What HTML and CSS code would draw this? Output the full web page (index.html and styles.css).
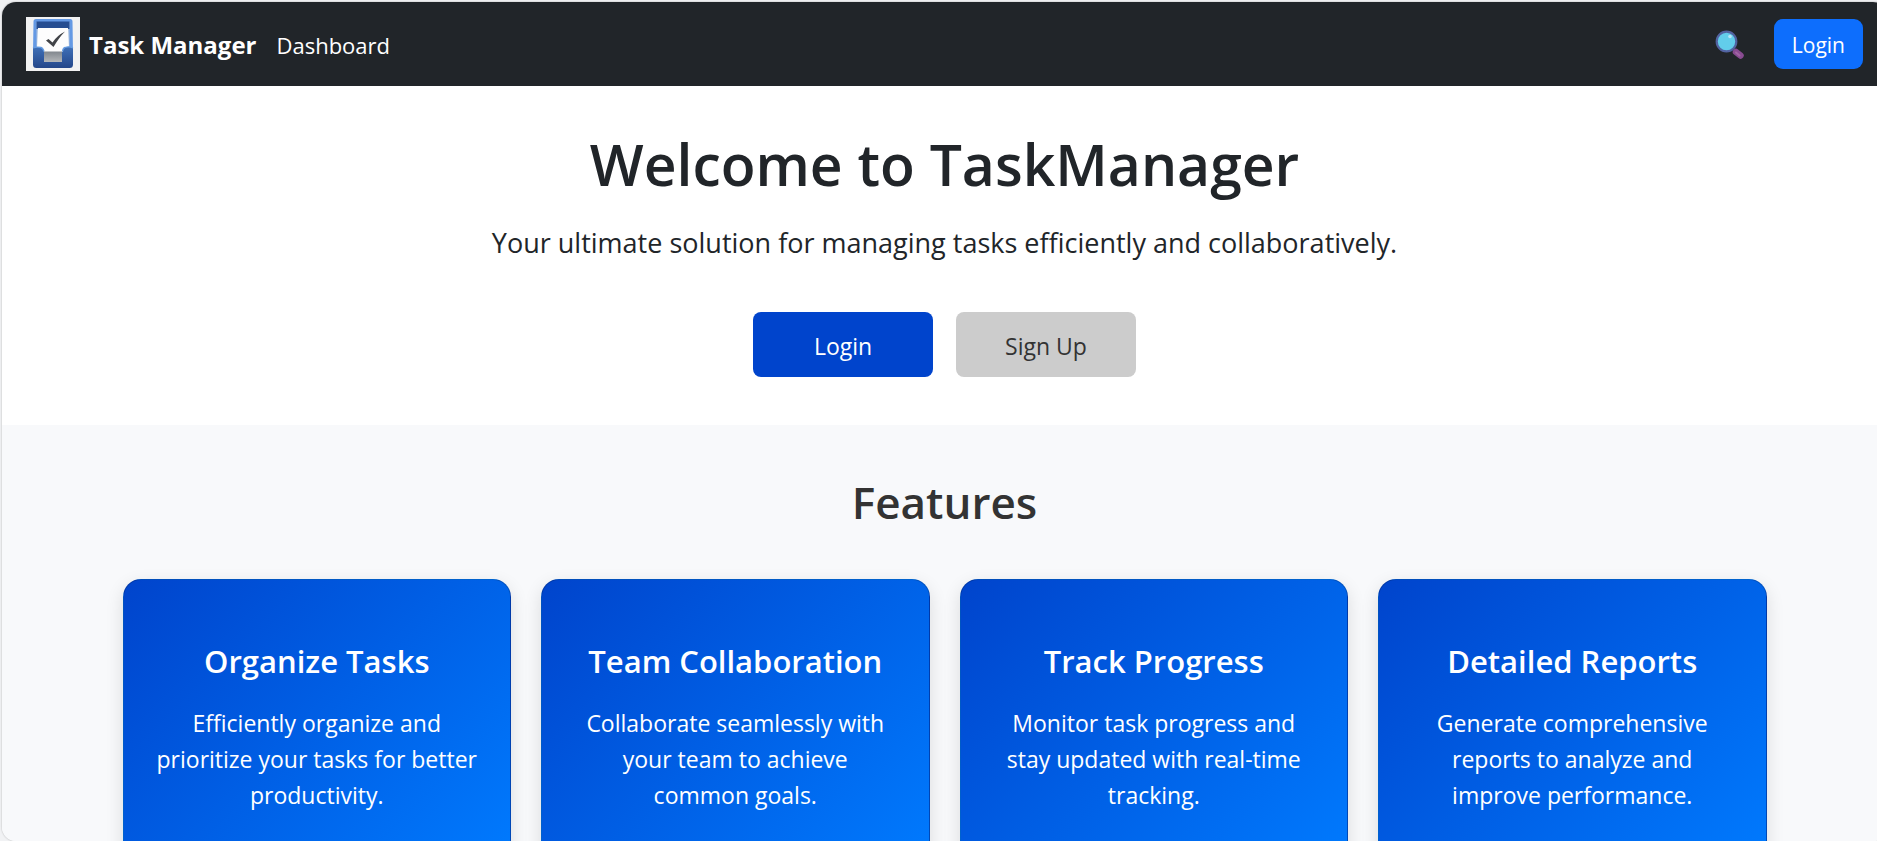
FILE: index.html
```html
<!DOCTYPE html>
<html lang="en">
<head>
<meta charset="utf-8">
<title>Task Manager</title>
<link rel="stylesheet" href="styles.css">
</head>
<body>
<div class="shell">
  <header class="navbar">
    <a class="brand" href="#">
      <svg class="brand-logo" viewBox="0 0 54 54" aria-hidden="true">
        <defs>
          <linearGradient id="tray" x1="0" y1="0" x2="0" y2="1"><stop offset="0" stop-color="#3f70b8"/><stop offset="1" stop-color="#24478a"/></linearGradient>
          <linearGradient id="slot" x1="0" y1="0" x2="0" y2="1"><stop offset="0" stop-color="#81878d"/><stop offset="1" stop-color="#b4b7ba"/></linearGradient>
        </defs>
        <rect width="54" height="54" fill="#f2f2f2"/>
        <path d="M10 2h34q2.500 0 2.500 2.500L47 35H7L7.500 4.500Q7.500 2 10 2z" fill="#6499e4"/>
        <path d="M10.500 5h33v28h-33z" fill="#a9c0de"/>
        <path d="M10.500 4.500h33V12h-33z" fill="#254d91"/>
        <path d="M12 11h30l1 20-6 4H18l-7-4z" fill="#fdfdfd"/>
        <path d="M7 31q4-1.500 8-.500 2 .5 3 4h18.500q.5-3.500 2.500-4 4-1.500 8 .5v16.500q0 3.500-3.500 3.500h-33Q7 51 7 47.500z" fill="url(#tray)"/>
        <path d="M18 30h18.500v5H18z" fill="#fdfdfd"/>
        <path d="M7 31q4-1.500 8-.500 2 .5 3 4M36.500 34.500q.5-3.500 2.500-4 4-1.500 8 .500" fill="none" stroke="#649be0" stroke-width="1.300"/>
        <rect x="18" y="34.500" width="18" height="10.500" fill="url(#slot)"/>
        <path d="M20 23.500l2.500-1.500 4 3.500Q31 18.500 39 14.500 33 20.500 27.500 30z" fill="#424448"/>
      </svg>
      <span class="brand-name">Task Manager</span>
    </a>
    <nav class="nav-links"><a class="nav-link" href="#">Dashboard</a></nav>
    <div class="nav-actions">
      <button class="search" type="button" aria-label="Search">
        <svg class="search-icon" viewBox="0 0 30 30" aria-hidden="true">
          <path d="M21 22L25.500 25.500" stroke="#884b91" stroke-width="6.500" stroke-linecap="round"/>
          <path d="M21 22.500L24.500 25.500" stroke="#a163a3" stroke-width="2" stroke-linecap="round"/>
          <circle cx="11.500" cy="11.500" r="9.800" fill="#62cdeb" stroke="#5263a1" stroke-width="2.200"/>
          <circle cx="15" cy="6.500" r="1.800" fill="#b8e5f7"/>
        </svg>
      </button>
      <button class="btn-nav" type="button">Login</button>
    </div>
  </header>
  <main>
    <section class="hero">
      <h1 class="hero-title">Welcome to TaskManager</h1>
      <p class="hero-lead">Your ultimate solution for managing tasks efficiently and collaboratively.</p>
      <div class="hero-actions">
        <button class="btn btn-primary" type="button">Login</button>
        <button class="btn btn-secondary" type="button">Sign Up</button>
      </div>
    </section>
    <section class="features">
      <h2 class="features-title">Features</h2>
      <div class="cards">
        <article class="card"><h3 class="card-title">Organize Tasks</h3><p class="card-text">Efficiently organize and prioritize your tasks for better productivity.</p></article>
        <article class="card"><h3 class="card-title">Team Collaboration</h3><p class="card-text">Collaborate seamlessly with your team to achieve common goals.</p></article>
        <article class="card"><h3 class="card-title">Track Progress</h3><p class="card-text">Monitor task progress and stay updated with real-time tracking.</p></article>
        <article class="card"><h3 class="card-title">Detailed Reports</h3><p class="card-text">Generate comprehensive reports to analyze and improve performance.</p></article>
      </div>
    </section>
  </main>
</div>
</body>
</html>
```
FILE: styles.css
```css
* { box-sizing: border-box; }

body {
  margin: 0;
  padding: 2px 0 0 2px;
  height: 100vh;
  overflow: hidden;
  background: #f1f2f4;
  color: #212529;
  font-family: "Open Sans", "Noto Sans", sans-serif;
  font-size: 23px;
  line-height: 36px;
}

h1, h2, h3, p { margin: 0; }
button { font: inherit; border: 0; cursor: pointer; }
a { color: inherit; text-decoration: none; }

/* The window frame runs slightly past the right edge of the viewport. */
.shell {
  height: 100%;
  margin-right: -10px;
  overflow: hidden;
  border-radius: 14px;
  background: #fff;
  box-shadow: 0 0 2px rgba(0, 0, 0, 0.3);
}

.navbar {
  display: flex;
  align-items: center;
  gap: 20px;
  padding: 15px 24px;
  background: #212529;
  color: #fff;
}
.brand { display: flex; align-items: center; gap: 9px; }
.brand-logo { display: block; width: 54px; height: 54px; }
.brand-name { padding-top: 2px; font-size: 24px; font-weight: 700; }
.nav-links { padding-top: 2px; font-size: 22px; }
.nav-actions { display: flex; align-items: center; gap: 25px; margin-left: auto; }
.search { padding: 6px 4px 4px; background: transparent; }
.search-icon { display: block; width: 30px; height: 30px; fill: none; }
.btn-nav {
  padding: 8px 18px 6px;
  border-radius: 9px;
  background: #0d6efd;
  color: #fff;
  font-size: 21px;
}

.hero { padding: 42px 24px 48px; text-align: center; }
.hero-title { font-size: 57px; font-weight: 600; line-height: 72px; }
.hero-lead { margin-top: 20px; font-size: 27px; line-height: 45px; }
.hero-actions { display: flex; justify-content: center; gap: 23px; margin-top: 47px; }
.btn { width: 180px; height: 65px; border-radius: 8px; padding: 3px 0 0; }
.btn-primary { background: #0044cc; color: #fff; }
.btn-secondary { background: #cccccc; color: #333; }

.features { padding: 48px 24px; background: #f8f9fb; text-align: center; }
.features-title { color: #333; font-size: 44px; font-weight: 600; line-height: 58px; }
.cards {
  display: grid;
  grid-template-columns: repeat(4, 1fr);
  gap: 30px;
  max-width: 1644px;
  margin: 48px auto 0;
}
.card {
  padding: 60px 32px;
  border: 1px solid rgba(0, 0, 0, 0.18);
  border-radius: 18px;
  background: linear-gradient(135deg, #0044cc, #007bff);
  box-shadow: 0 6px 18px rgba(0, 0, 0, 0.12);
  color: #fff;
}
.card-title { font-size: 31px; font-weight: 600; line-height: 43px; }
.card-text { margin-top: 22px; }
```
